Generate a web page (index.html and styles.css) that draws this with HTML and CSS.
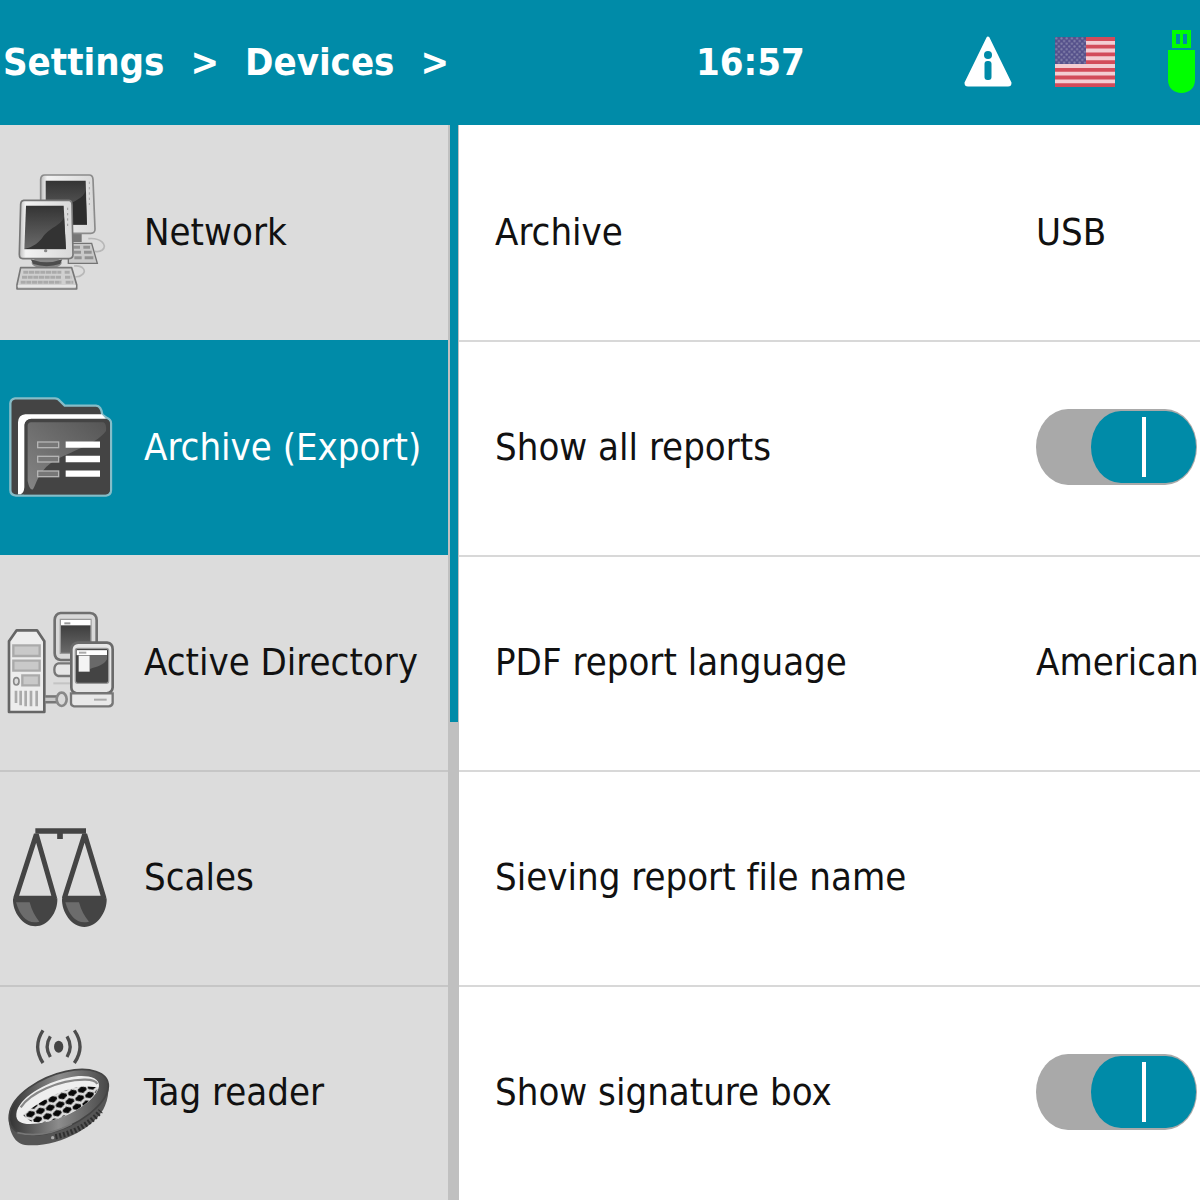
FILE: index.html
```html
<!DOCTYPE html>
<html lang="en">
<head>
    <meta charset="UTF-8">
    <meta name="viewport" content="width=device-width, initial-scale=1.0">
    <title>Settings - Devices</title>
    <link rel="stylesheet" href="styles.css">
</head>
<body>
    <header class="topbar">
        <nav class="breadcrumb" aria-label="Breadcrumb">
            <a href="#settings">Settings</a>
            <span>&gt;</span>
            <a href="#devices">Devices</a>
            <span>&gt;</span>
        </nav>
        <time class="clock">16:57</time>
        <div class="status">
            <svg class="warning" viewBox="0 0 50 52" role="img" aria-label="Notice">
                <path d="M25 2 L47 47 Q47 49 45 49 H5 Q3 49 3 47 Z" fill="#fff" stroke="#fff" stroke-width="3" stroke-linejoin="round"/>
                <circle cx="25" cy="19" r="4" fill="#008ba8"/>
                <rect x="21.500" y="25" width="7" height="19" rx="3" fill="#008ba8"/>
            </svg>
            <svg class="flag" viewBox="0 0 60 50" role="img" aria-label="American English">
                <defs>
                    <pattern id="stars" width="5.2" height="5.4" patternUnits="userSpaceOnUse">
                        <circle cx="1.3" cy="1.4" r="1.1" fill="#8482ab"/>
                        <circle cx="3.9" cy="4.1" r="1.1" fill="#8482ab"/>
                    </pattern>
                </defs>
                <rect width="60" height="50" fill="#f3cdd3"/>
                <path d="M0 2H60M0 9.7H60M0 17.4H60M0 25.1H60M0 32.8H60M0 40.5H60M0 48.2H60" stroke="#d24b5a" stroke-width="3.8"/>
                <rect width="31" height="27" fill="#55518b"/>
                <rect width="31" height="27" fill="url(#stars)"/>
            </svg>
            <svg class="usb" viewBox="0 0 43 64" role="img" aria-label="USB connected">
                <path d="M15 0H34V18H15Z M19 4V14H23V4Z M26 4V14H30V4Z" fill="#00ff00" fill-rule="evenodd"/>
                <path d="M11 20H38V50C38 58 32 63 24.500 63S11 58 11 50Z" fill="#00ff00"/>
            </svg>
        </div>
    </header>

    <div class="layout">
        <nav class="menu" aria-label="Devices">
            <a class="menu-item" href="#network">
                <svg class="menu-icon" viewBox="0 6 390 420" aria-hidden="true">
                    <defs>
                        <linearGradient id="screen" x1="0" y1="0" x2="0" y2="1">
                            <stop offset="0" stop-color="#343434"/>
                            <stop offset="1" stop-color="#6b6b6b"/>
                        </linearGradient>
                        <linearGradient id="case" x1="0" y1="0" x2="1" y2="0">
                            <stop offset="0" stop-color="#bdbdbd"/>
                            <stop offset=".12" stop-color="#f2f2f2"/>
                            <stop offset="1" stop-color="#d8d8d8"/>
                        </linearGradient>
                    </defs>
                    <path d="M265 236C300 232 325 255 307 270Q298 277 285 274M222 318C250 315 262 335 245 345Q238 351 226 350" fill="none" stroke="#b8b8b8" stroke-width="5"/>
                    <path d="M205 250H275L292 310H205Z" fill="#c9c9c9" stroke="#747474" stroke-width="4"/>
                    <path d="M220 262H240M222 277H243M223 293H245M250 262H270M252 277H275M254 293H280" stroke="#929292" stroke-width="9"/>
                    <path d="M210 222H245V246H205Z" fill="#777"/>
                    <path d="M134 45H268Q278 45 279 58L285 208Q285 220 272 220H200L122 140V58Q123 45 134 45Z" fill="url(#case)" stroke="#8b8b8b" stroke-width="5"/>
                    <path d="M137 62H257L261 194H137Z" fill="url(#screen)"/>
                    <path d="M257 92C250 116 216 126 200 136V194H261Z" fill="#2d2d2d"/>
                    <path d="M268 65V135" stroke="#aaa" stroke-width="3" stroke-dasharray="7 9"/>
                    <ellipse cx="140" cy="308" rx="45" ry="18" fill="#898989"/>
                    <path d="M92 298Q140 316 187 298L180 312Q140 325 100 312Z" fill="#4d4d4d"/>
                    <path d="M71 121H207Q216 122 216 135L219 283Q219 296 207 296H68Q58 296 58 283L62 132Q63 122 71 121Z" fill="url(#case)" stroke="#777" stroke-width="5"/>
                    <path d="M78 137H191L198 268H73Z" fill="url(#screen)"/>
                    <path d="M192 170C184 198 145 202 126 235C110 255 92 263 73 267H198Z" fill="#333"/>
                    <path d="M203 143V207" stroke="#999" stroke-width="3" stroke-dasharray="7 9"/>
                    <circle cx="137" cy="272" r="5" fill="#888"/>
                    <path d="M62 323H215L230 374V387H51V374Z" fill="#d0d0d0" stroke="#777" stroke-width="5" stroke-linejoin="round"/>
                    <path d="M70 337H184M66 352H184M62 367H184M194 337H210M195 352H214M197 367H220" stroke="#aaa" stroke-width="9" stroke-dasharray="15 2"/>
                    <path d="M53 378H228" stroke="#eee" stroke-width="4"/>
                </svg>
                <span>Network</span>
            </a>
            <a class="menu-item active" href="#archive" aria-current="page">
                <svg class="menu-icon" viewBox="0 -24 390 420" aria-hidden="true">
                    <defs>
                        <linearGradient id="gloss" x1="1" y1="0" x2="0" y2="1">
                            <stop offset="0" stop-color="#565656"/>
                            <stop offset="1" stop-color="#858585"/>
                        </linearGradient>
                    </defs>
                    <path d="M45 40H165Q174 40 180 48L194 62H288Q304 63 307 89L319 98Q333 103 333 115V315Q333 330 318 332H48Q31 330 31 315V55Q32 42 45 40Z" fill="#444" stroke="#86bdc8" stroke-width="7"/>
                    <path d="M54 328V112Q55 90 76 88H305L318 101H94Q76 102 73 119V307Q72 324 62 328Z" fill="#fff"/>
                    <path d="M72 328Q75 322 75 305V119Q77 104 92 103H316Q330 105 330 118V312Q330 328 315 328Z" fill="#444"/>
                    <path d="M83 121Q84 113 93 112H310Q320 116 318 138C284 184 196 202 150 236C116 262 108 297 99 313Q89 318 83 288Z" fill="url(#gloss)"/>
                    <g fill="#777" stroke="#b5b5b5" stroke-width="4">
                        <rect x="113" y="171" width="63" height="17"/>
                        <rect x="113" y="214" width="63" height="17"/>
                        <rect x="113" y="258" width="63" height="17"/>
                    </g>
                    <path d="M197 179H300M197 222H300M197 266H300" stroke="#fff" stroke-width="19"/>
                </svg>
                <span>Archive (Export)</span>
            </a>
            <a class="menu-item" href="#active-directory">
                <svg class="menu-icon" viewBox="0 -24 390 420" aria-hidden="true">
                    <path d="M160 250H215" stroke="#c4c4c4" stroke-width="6"/>
                    <path d="M175 190H230V228H175Q163 225 163 209T175 190Z" fill="#e6e6e6" stroke="#777" stroke-width="7"/>
                    <path d="M182 39H270Q290 41 290 61V180H182Q164 178 164 160V60Q165 41 182 39Z" fill="#d9d9d9" stroke="#707070" stroke-width="8"/>
                    <path d="M181 58H273V160H181Z" fill="url(#screen)" stroke="#999" stroke-width="4"/>
                    <path d="M183 68H272" stroke="#fff" stroke-width="16"/>
                    <path d="M193 70H211" stroke="#999" stroke-width="6"/>
                    <path d="M234 128H321Q338 130 338 148V262Q337 278 320 280H229Q214 277 214 262V147Q216 130 234 128Z" fill="#e6e6e6" stroke="#6a6a6a" stroke-width="8"/>
                    <rect x="226" y="145" width="100" height="105" rx="7" fill="#444" stroke="#999" stroke-width="4"/>
                    <path d="M230 158H321" stroke="#fff" stroke-width="15"/>
                    <path d="M236 167H269V215H236Z" fill="#f4f4f4"/>
                    <path d="M270 166H321V178C312 196 290 200 270 207Z" fill="#696969"/>
                    <path d="M237 158H259" stroke="#aaa" stroke-width="6"/>
                    <path d="M213 280H338V309Q337 318 326 319H222Q213 317 213 309Z" fill="#e9e9e9" stroke="#777" stroke-width="7"/>
                    <path d="M282 299H320" stroke="#aaa" stroke-width="6"/>
                    <path d="M50 91H111L133 124V336H27V124Z" fill="#ededed" stroke="#666" stroke-width="8" stroke-linejoin="round"/>
                    <path d="M40 136H119V168H40ZM40 182H119V212H40ZM67 226H117V256H67Z" fill="#c9c9c9" stroke="#aaa" stroke-width="7"/>
                    <ellipse cx="49" cy="244" rx="8" ry="11" fill="#ddd" stroke="#888" stroke-width="5"/>
                    <path d="M48 272V309M62 272V316M77 272V319M93 272V319M110 272V319" stroke="#aaa" stroke-width="8"/>
                    <path d="M136 298H171" stroke="#777" stroke-width="25"/>
                    <path d="M136 298H171" stroke="#c8c8c8" stroke-width="10"/>
                    <ellipse cx="185" cy="298" rx="15" ry="20" fill="#d9d9d9" stroke="#888" stroke-width="8"/>
                </svg>
                <span>Active Directory</span>
            </a>
            <a class="menu-item" href="#scales">
                <svg class="menu-icon" viewBox="0 -24 390 420" aria-hidden="true">
                    <path d="M106 48H258M180 50V72" stroke="#444" stroke-width="17"/>
                    <path d="M109 58L47 250H164ZM254 58L193 250H312Z" fill="none" stroke="#444" stroke-width="15" stroke-linejoin="bevel"/>
                    <path d="M39 250H172C174 293 143 334 106 334S37 293 39 250ZM186 250H320C322 293 290 336 253 336S184 293 186 250Z" fill="#444"/>
                    <path d="M48 262H89Q98 296 118 320Q69 333 48 262ZM196 262H237Q246 296 267 320Q217 333 196 262Z" fill="#6c6c6c"/>
                </svg>
                <span>Scales</span>
            </a>
            <a class="menu-item" href="#tag-reader">
                <svg class="menu-icon" viewBox="0 6 390 420" aria-hidden="true">
                    <defs>
                        <pattern id="mesh" width="31" height="44" patternUnits="userSpaceOnUse" patternTransform="rotate(-18)">
                            <rect width="31" height="44" fill="#ddd"/>
                            <path d="M15 1L28 7V15L15 21L2 15V7ZM0 23L13 29V37L0 43ZM31 23L18 29V37L31 43Z" fill="#080808"/>
                        </pattern>
                        <linearGradient id="rim" x1="0" y1="0" x2="1" y2="0">
                            <stop offset="0" stop-color="#333"/>
                            <stop offset=".5" stop-color="#8c8c8c"/>
                            <stop offset="1" stop-color="#484848"/>
                        </linearGradient>
                    </defs>
                    <ellipse cx="176" cy="80" rx="14" ry="18" fill="#444"/>
                    <path d="M151 49Q132 80 151 111M201 49Q220 80 201 111M129 31Q97 80 129 129M223 31Q257 80 223 129" fill="none" stroke="#4c4c4c" stroke-width="10"/>
                    <path d="M27 293C25 325 40 370 75 375C175 384 290 320 315 257Q327 230 325 195L180 300Z" fill="#555"/>
                    <path d="M166 350C220 340 270 312 302 273" fill="none" stroke="#303030" stroke-width="16" stroke-dasharray="6 6"/>
                    <path d="M28 285C34 225 123 170 198 154C267 139 326 155 325 199C323 251 236 320 142 340C70 355 22 335 28 285Z" fill="url(#rim)" stroke="#444" stroke-width="5"/>
                    <path d="M49 281C55 233 136 187 204 173C249 163 299 168 297 198C292 237 215 290 139 306C90 316 45 317 49 281Z" fill="#eee"/>
                    <path d="M62 262C91 219 176 180 252 179Q285 178 292 192" fill="none" stroke="#888" stroke-width="7"/>
                    <path d="M70 285C108 250 182 207 250 199L294 202C287 239 215 289 139 306Q89 314 70 285Z" fill="url(#mesh)"/>
                    <path d="M52 338Q130 357 215 312" fill="none" stroke="#777" stroke-width="5"/>
                    <circle cx="158" cy="353" r="5" fill="#aaa"/>
                </svg>
                <span>Tag reader</span>
            </a>
        </nav>

        <div class="scrollbar"><div class="thumb"></div></div>

        <main class="options">
            <div class="option">
                <span>Archive</span>
                <span>USB</span>
            </div>
            <div class="option">
                <label for="all-reports">Show all reports</label>
                <input class="switch" type="checkbox" id="all-reports" checked>
            </div>
            <div class="option">
                <span>PDF report language</span>
                <span>American</span>
            </div>
            <div class="option">
                <span>Sieving report file name</span>
            </div>
            <div class="option">
                <label for="signature-box">Show signature box</label>
                <input class="switch" type="checkbox" id="signature-box" checked>
            </div>
        </main>
    </div>
</body>
</html>
```
FILE: styles.css
```css
* {
    box-sizing: border-box;
}
body {
    margin: 0;
    font-family: "DejaVu Sans Condensed", "DejaVu Sans", sans-serif;
    font-size: 38px;
    font-variant-ligatures: none;
    line-height: 52px;
    color: #111;
    background-color: #fff;
    overflow-x: hidden;
}
a {
    color: inherit;
    text-decoration: none;
}
.topbar {
    display: grid;
    grid-template-columns: 58% auto 1fr;
    align-items: center;
    min-height: 125px;
    padding-bottom: 2px;
    background-color: #008ba8;
    color: #fff;
    font-weight: bold;
}
.breadcrumb {
    display: flex;
    gap: 26px;
    padding-left: 3px;
}
.status {
    display: flex;
    align-items: center;
    justify-content: flex-end;
    gap: 42px;
}
.warning {
    width: 50px;
    height: 52px;
}
.flag {
    width: 60px;
    height: 50px;
}
.usb {
    width: 43px;
    height: 64px;
}
.layout {
    display: grid;
    grid-template-columns: 448px 11px 1fr;
}
.menu-item,
.option {
    height: 215px;
    padding-bottom: 3px;
    white-space: nowrap;
}
.menu-item {
    display: flex;
    align-items: center;
    gap: 14px;
    background-color: #dcdcdc;
    border-top: 2px solid #c6c6c6;
}
.menu-item:first-child,
.menu-item.active + .menu-item {
    border-top-color: #dcdcdc;
}
.menu-item.active {
    background-color: #008ba8;
    border-top-color: #008ba8;
    color: #fff;
}
.menu-icon {
    flex: none;
    width: 130px;
    height: 140px;
}
.scrollbar {
    padding: 0 1px 0 2px;
    background-color: #c0c0c0;
}
.thumb {
    height: 597px;
    background-color: #008ba8;
}
.option {
    display: grid;
    grid-template-columns: 1fr 164px;
    align-items: center;
    padding-left: 36px;
    border-top: 2px solid #d8d8d8;
}
.option:first-child {
    border-top-color: #fff;
}
.switch {
    appearance: none;
    display: flex;
    justify-content: flex-start;
    width: 161px;
    height: 76px;
    margin: 0;
    padding: 2px 1px;
    border-radius: 32px / 38px;
    background-color: #a9a9a9;
}
.switch:checked {
    justify-content: flex-end;
}
.switch::before {
    content: "";
    width: 105px;
    border-radius: 30px / 36px;
    background: linear-gradient(#fff, #fff) center / 4px 60px no-repeat #008ba8;
}
```
